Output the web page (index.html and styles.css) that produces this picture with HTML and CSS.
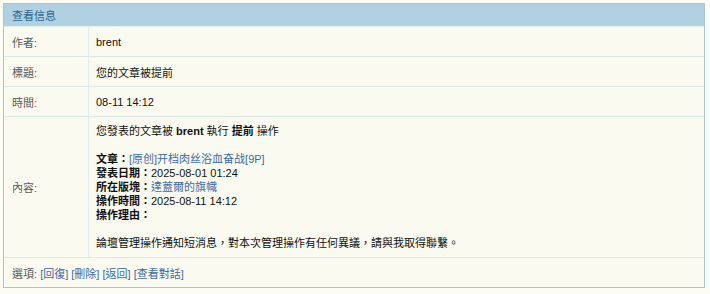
FILE: index.html
```html
<!DOCTYPE html>
<html>
<head>
<meta charset="utf-8">
<link rel="stylesheet" href="styles.css">
</head>
<body>
<div class="box">
<table class="msg">
<tr><td class="head" colspan="2">查看信息</td></tr>
<tr class="row"><td class="label">作者:</td><td class="value">brent</td></tr>
<tr class="row"><td class="label">標題:</td><td class="value">您的文章被提前</td></tr>
<tr class="row"><td class="label">時間:</td><td class="value">08-11 14:12</td></tr>
<tr class="content"><td class="label">內容:</td><td class="value body">
<div class="line">您發表的文章被 <b>brent</b> 執行 <b>提前</b> 操作</div>
<div class="line">&nbsp;</div>
<div class="line"><b>文章：</b><a href="#">[原创]开档肉丝浴血奋战[9P]</a></div>
<div class="line"><b>發表日期：</b>2025-08-01 01:24</div>
<div class="line"><b>所在版塊：</b><a href="#">達蓋爾的旗幟</a></div>
<div class="line"><b>操作時間：</b>2025-08-11 14:12</div>
<div class="line"><b>操作理由：</b></div>
<div class="line">&nbsp;</div>
<div class="line">論壇管理操作通知短消息，對本次管理操作有任何異議，請與我取得聯繫。</div>
</td></tr>
<tr class="foot"><td colspan="2">選項: <a href="#">[回復]</a> <a href="#">[刪除]</a> <a href="#">[返回]</a> <a href="#">[查看對話]</a></td></tr>
</table>
</div>
</body>
</html>
```
FILE: styles.css
```css
html, body {
  margin: 0;
  background: #fcfcf5;
}
body {
  padding: 3px 5px 0 3px;
  font-family: "Liberation Sans", "Noto Sans CJK TC", sans-serif;
  font-size: 11px;
  color: #222;
}
.box {
  border: 1px solid #a8c6d0;
  width: 700px;
  background: #fafaf0;
}
.msg {
  width: 100%;
  border-collapse: collapse;
  border-spacing: 0;
}
.msg td {
  padding: 0;
  vertical-align: middle;
  border-bottom: 1px solid #dae8e6;
}
.head {
  height: 22px;
  background: #afd1e1;
  color: #2c6491;
  padding-left: 8px !important;
  border-bottom: 1px solid #e3eeee !important;
}
.row td {
  height: 29px;
}
.label {
  width: 76px;
  padding-left: 8px !important;
  color: #5a5a5a;
  border-right: 1px solid #e3eeea;
}
.value {
  padding-left: 7px !important;
  color: #111;
}
.body {
  padding-top: 7px !important;
  padding-bottom: 7px !important;
}
.line {
  line-height: 14px;
  height: 14px;
}
.line b {
  font-weight: bold;
  color: #111;
}
a {
  color: #3a6aa4;
  text-decoration: none;
}
.foot td {
  height: 29px;
  padding-left: 8px !important;
  color: #5a5a5a;
  border-top: 1px solid #dae8e6;
  border-bottom: none;
}
```
